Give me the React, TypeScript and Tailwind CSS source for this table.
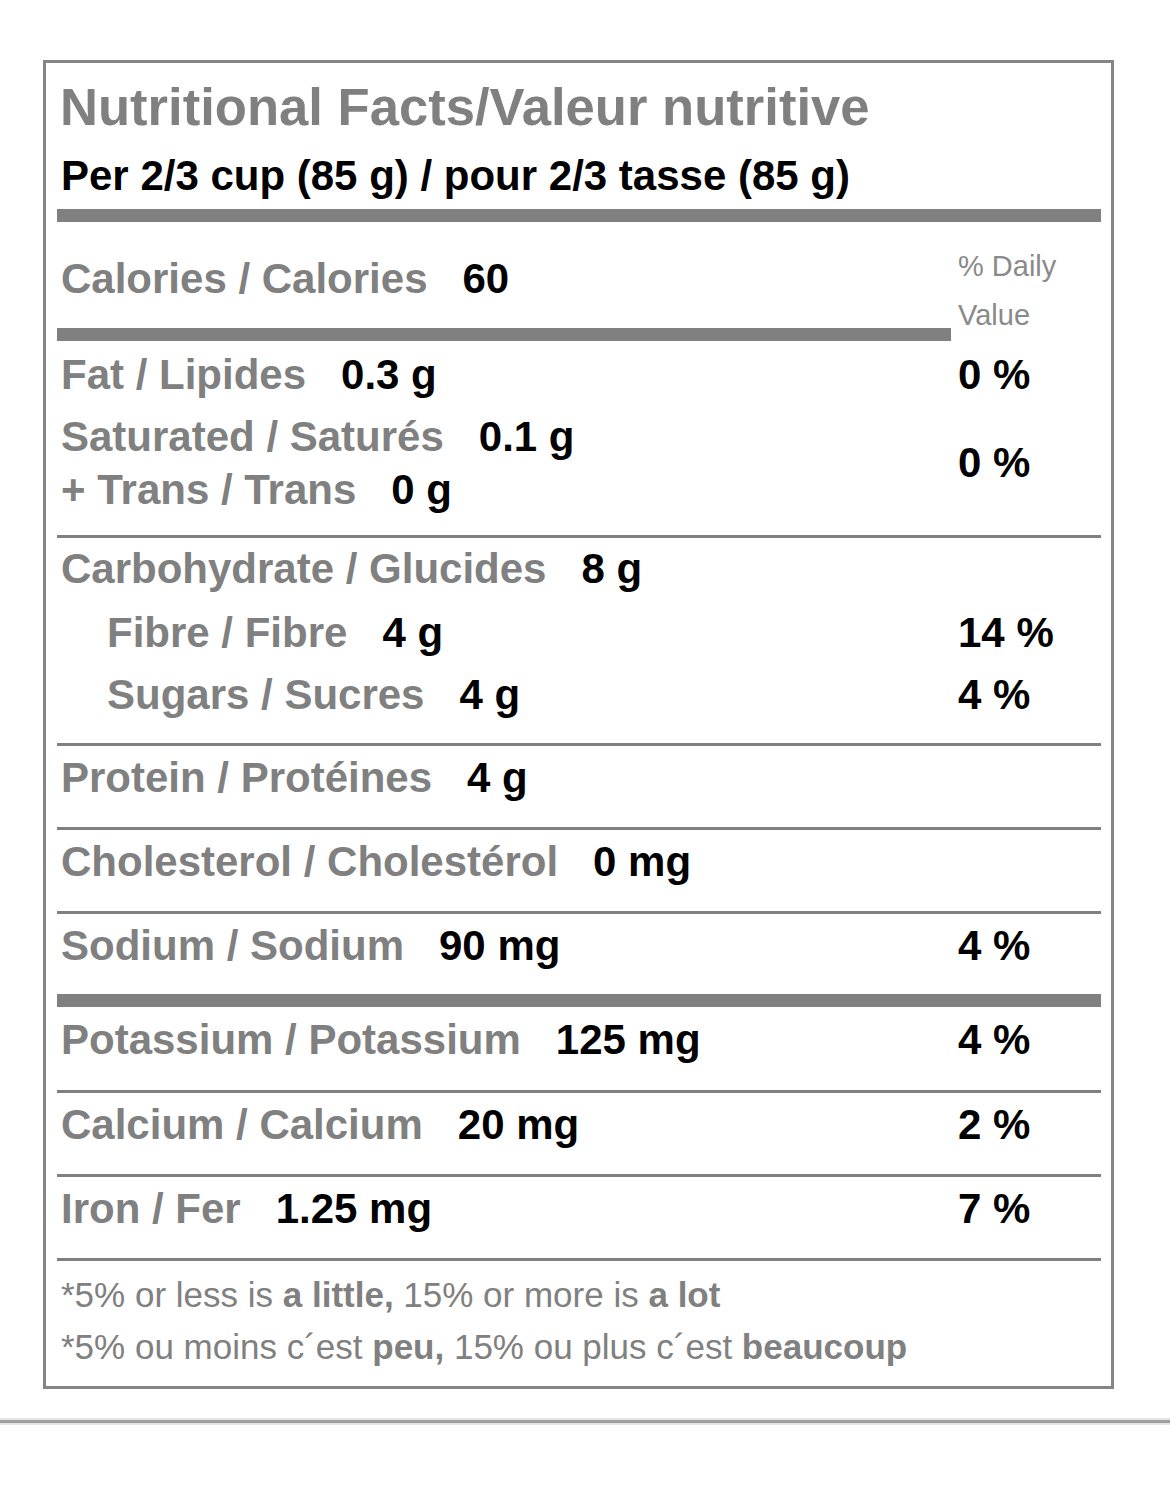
import React from "react";

type NutrientProps = {
  label: string;
  value: string;
  indent?: boolean;
  className?: string;
};

// one label + amount line, 42px bold
function Nutrient({ label, value, indent, className }: NutrientProps) {
  return (
    <div
      className={`${indent ? "pl-[50px]" : "pl-[4px]"} whitespace-nowrap text-[42px] leading-[48px] font-bold ${className ?? ""}`}
    >
      <span className="text-[#808080]">{label}</span>
      <span className="ml-[35px] text-black">{value}</span>
    </div>
  );
}

function Pct({ children, className }: { children?: React.ReactNode; className?: string }) {
  return (
    <div className={`whitespace-nowrap text-[42px] leading-[48px] font-bold text-black ${className ?? ""}`}>
      {children}
    </div>
  );
}

const Line = () => <div className="h-[3px] bg-[#808080]" />;
const Bar = () => <div className="h-[13px] bg-[#808080]" />;

function Row({
  label,
  value,
  pct,
  className,
}: {
  label: string;
  value: string;
  pct?: string;
  className: string;
}) {
  return (
    <div className={`grid grid-cols-[901px_143px] items-start ${className}`}>
      <Nutrient label={label} value={value} />
      <Pct>{pct}</Pct>
    </div>
  );
}

export default function App() {
  return (
    <div className="min-h-[1496px] bg-white pt-[60px] font-['Liberation_Sans',Arial,Helvetica,sans-serif]">
      <div className="ml-[43px] w-[1071px] border-[3px] border-[#868686] pl-[11px] pr-[10px] pt-[14px] pb-[13.5px]">
        <h1 className="pl-[3px] whitespace-nowrap text-[52.6px] leading-[60px] font-bold text-[#808080]">
          Nutritional Facts/Valeur nutritive
        </h1>
        <p className="mt-[15px] pl-[4px] whitespace-nowrap text-[42px] leading-[48px] font-bold text-black">
          Per 2/3 cup (85 g) / pour 2/3 tasse (85 g)
        </p>
        <div className="mt-[9px]">
          <Bar />
        </div>

        {/* calories + daily value heading */}
        <div className="grid grid-cols-[901px_143px] items-start">
          <div>
            <Nutrient className="mt-[33px]" label="Calories / Calories" value="60" />
            <div className="mt-[25px] mr-[7px] h-[13px] bg-[#808080]" />
          </div>
          <div className="mt-[19.5px] text-[29px] leading-[49px] text-[#8a8a8a]">
            % Daily
            <br />
            Value
          </div>
        </div>

        {/* fat */}
        <div className="grid grid-cols-[901px_143px] items-stretch pt-[9.5px] pb-[21.5px]">
          <Nutrient label="Fat / Lipides" value="0.3 g" />
          <Pct>0 %</Pct>
          <div className="mt-[14.5px] flex flex-col gap-[4.5px]">
            <Nutrient label="Saturated / Saturés" value="0.1 g" />
            <Nutrient label="+ Trans / Trans" value="0 g" />
          </div>
          <div className="mt-[14.5px] flex items-center">
            <Pct>0 %</Pct>
          </div>
        </div>
        <Line />

        {/* carbohydrate */}
        <div className="grid grid-cols-[901px_143px] items-start pt-[6.5px] pb-[24.5px]">
          <Nutrient label="Carbohydrate / Glucides" value="8 g" />
          <div />
          <Nutrient className="mt-[16px]" indent label="Fibre / Fibre" value="4 g" />
          <Pct className="mt-[16px]">14 %</Pct>
          <Nutrient className="mt-[14px]" indent label="Sugars / Sucres" value="4 g" />
          <Pct className="mt-[14px]">4 %</Pct>
        </div>
        <Line />

        <Row className="h-[81px] pt-[7.5px]" label="Protein / Protéines" value="4 g" />
        <Line />
        <Row className="h-[81px] pt-[7.5px]" label="Cholesterol / Cholestérol" value="0 mg" />
        <Line />
        <Row className="h-[80px] pt-[7.5px]" label="Sodium / Sodium" value="90 mg" pct="4 %" />
        <Bar />
        <Row className="h-[83px] pt-[8.5px]" label="Potassium / Potassium" value="125 mg" pct="4 %" />
        <Line />
        <Row className="h-[81px] pt-[7.5px]" label="Calcium / Calcium" value="20 mg" pct="2 %" />
        <Line />
        <Row className="h-[81px] pt-[7.5px]" label="Iron / Fer" value="1.25 mg" pct="7 %" />
        <Line />

        {/* footnote */}
        <div className="pt-[7.5px] pl-[4px] whitespace-nowrap text-[35px] leading-[52px] text-[#808080]">
          <p>
            *5% or less is <b>a little,</b> 15% or more is <b>a lot</b>
          </p>
          <p>
            *5% ou moins c´est <b>peu,</b> 15% ou plus c´est <b>beaucoup</b>
          </p>
        </div>
      </div>

      <div className="mt-[29px] h-[7px] border-y-2 border-[#e4e4e4] bg-[#9e9e9e]" />
    </div>
  );
}
